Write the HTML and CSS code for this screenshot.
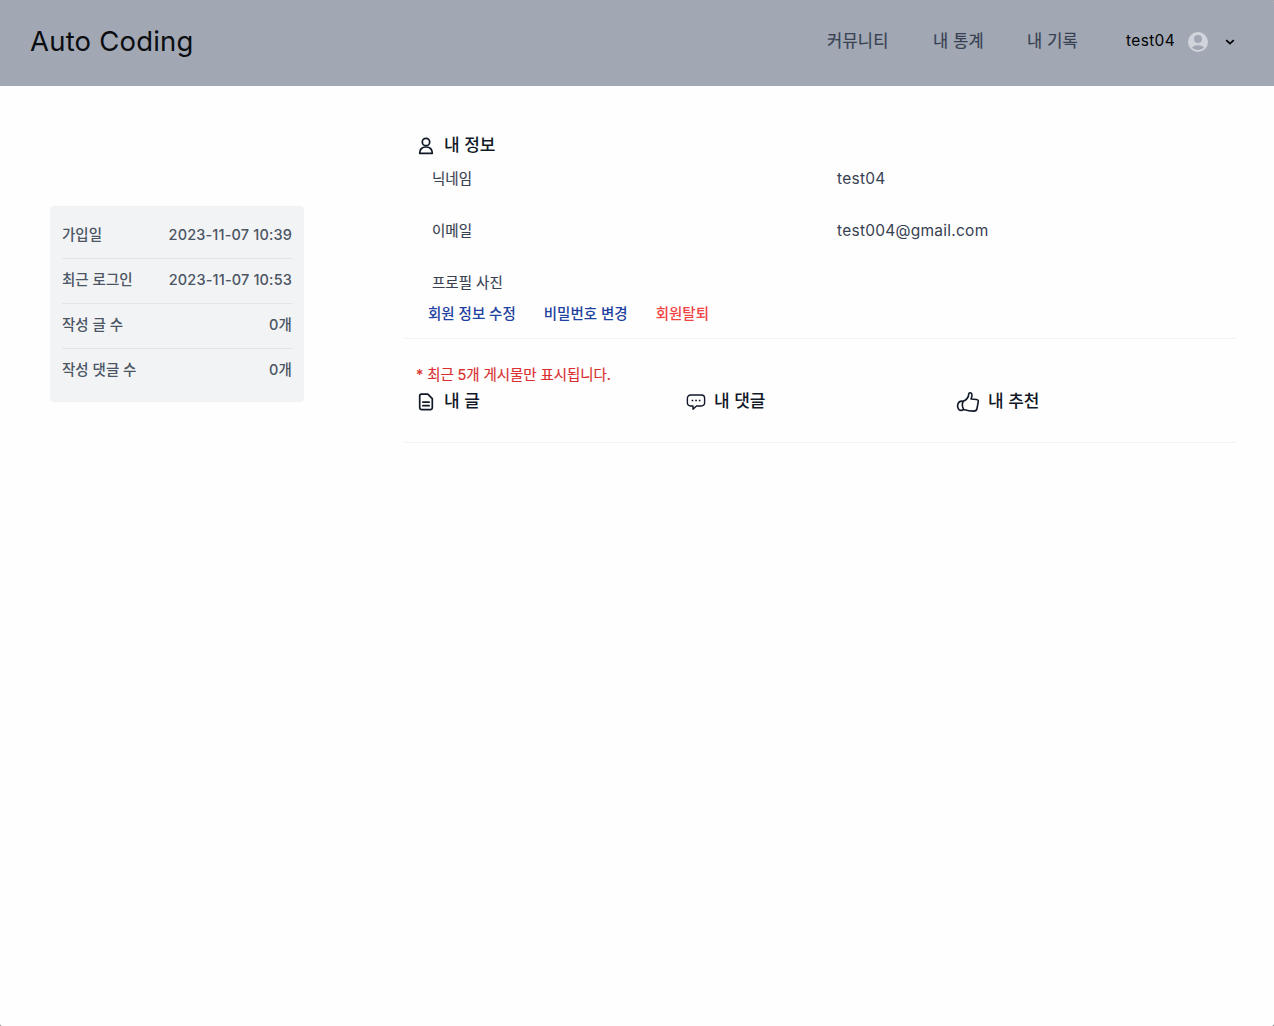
FILE: index.html
```html
<!DOCTYPE html>
<html lang="ko">
<head>
<meta charset="utf-8">
<title>Auto Coding</title>
<link rel="stylesheet" href="styles.css">
</head>
<body>
<div class="page">
  <header class="header">
    <div class="brand">Auto Coding</div>
    <nav class="nav">
      <a class="nav-link nav-community">커뮤니티</a>
      <a class="nav-link nav-stats">내 통계</a>
      <a class="nav-link nav-records">내 기록</a>
      <div class="account">
        <span class="account-name">test04</span>
        <svg class="avatar" viewBox="0 0 20 20"><path fill="#d1d5db" fill-rule="evenodd" d="M10 0a10 10 0 1 0 0 20a10 10 0 0 0 0-20zM10 3a4 4 0 1 1 0 8a4 4 0 0 1 0-8zM4 15.600c1.200-1.600 3.600-2.400 6-2.400s4.800.8 6 2.400c-1.500 1.600-3.600 2.400-6 2.400s-4.500-.8-6-2.400z"/></svg>
        <svg class="chevron" viewBox="0 0 10 6"><path d="M1.200 1.100L5 4.700l3.800-3.600" fill="none" stroke="#000" stroke-width="1.700"/></svg>
      </div>
    </nav>
  </header>
  <main class="main">
    <aside class="stats">
      <div class="stat"><span>가입일</span><span class="num">2023-11-07 10:39</span></div>
      <div class="stat"><span>최근 로그인</span><span class="num">2023-11-07 10:53</span></div>
      <div class="stat"><span>작성 글 수</span><span class="num">0개</span></div>
      <div class="stat"><span>작성 댓글 수</span><span class="num">0개</span></div>
    </aside>
    <div class="content">
      <section class="profile">
        <h2 class="title">
          <svg class="icon" viewBox="0 0 16 18"><g fill="none" stroke="#111827" stroke-width="1.700"><circle cx="8" cy="5" r="3.700"/><path d="M1.700 16.300c0-4 2.500-6.300 6.300-6.300s6.300 2.300 6.300 6.300z" stroke-linejoin="round"/></g></svg>
          <span>내 정보</span>
        </h2>
        <div class="field"><span>닉네임</span><span class="value">test04</span></div>
        <div class="field"><span>이메일</span><span class="value">test004@gmail.com</span></div>
        <div class="field field-last"><span>프로필 사진</span></div>
        <div class="actions">
          <a class="action">회원 정보 수정</a>
          <a class="action">비밀번호 변경</a>
          <a class="action danger">회원탈퇴</a>
        </div>
      </section>
      <section class="activity">
        <p class="notice">* 최근 5개 게시물만 표시됩니다.</p>
        <div class="columns">
          <h2 class="title">
            <svg class="icon" viewBox="0 0 16 18"><path d="M3.500 1.200h6.300l4.500 4.500v9a2 2 0 0 1-2 2H3.700a2 2 0 0 1-2-2V3.200a2 2 0 0 1 1.800-2zM4.900 9.200h6.200M4.900 12.700h6.200" fill="none" stroke="#111827" stroke-width="1.700" stroke-linecap="round" stroke-linejoin="round"/></svg>
            <span>내 글</span>
          </h2>
          <h2 class="title">
            <svg class="icon icon-chat" viewBox="0 0 20 18"><path d="M4.500 2h11a3.100 3.100 0 0 1 3.100 3.100v4.800a3.100 3.100 0 0 1-3.100 3.100H10.500L7 16.300V13H4.500a3.100 3.100 0 0 1-3.100-3.100V5.100A3.100 3.100 0 0 1 4.500 2z" fill="none" stroke="#111827" stroke-width="1.400" stroke-linejoin="round"/><path d="M5.600 6.800h1.700v1.500H5.600zM9.200 6.800h1.700v1.500H9.200zM12.800 6.800h1.700v1.500h-1.700z" fill="#111827"/></svg>
            <span>내 댓글</span>
          </h2>
          <h2 class="title">
            <svg class="icon icon-like" viewBox="0 0 24 22"><path d="M7.300 10.200c2.700-1 5.200-3.800 5.500-7.300c.2-1.600 2.500-1.400 3 .2c.4 1.400.1 2.900-.8 4.900l5.500.5c1.700.2 2 1.300 1.700 2.700l-1.200 6.300c-.4 2-1.600 2.700-3.500 2.600c-4.500-.1-6.300-.6-9.800-1.600M7.300 10.200c-1.300 2.600-1.300 5.600.4 8.300M7.300 10.200c-3-.5-4.500.4-5.300 2.600c-.7 2.200-.4 4.300.9 5.800c1.300 1 3 .9 4.800-.1" fill="none" stroke="#111827" stroke-width="1.600" stroke-linecap="round" stroke-linejoin="round"/></svg>
            <span>내 추천</span>
          </h2>
        </div>
      </section>
    </div>
  </main>
</div>
</body>
</html>
```
FILE: styles.css
```css
* { box-sizing: border-box; }
html { background: #6b6d70; }
body {
  margin: 0;
  font-family: "Inter", "Noto Sans CJK KR", sans-serif;
  color: #111827;
}
.page {
  min-height: 1026px;
  background: #fefefe;
  border-radius: 2px;
  overflow: hidden;
}
.header {
  height: 86px;
  padding: 20px 38px 0 30px;
  background: #a1a8b4;
  display: flex;
  justify-content: space-between;
}
.brand {
  font-size: 27.5px;
  line-height: 42px;
  letter-spacing: .2px;
  color: #0b0d11;
  white-space: nowrap;
}
.nav {
  display: flex;
  height: 42px;
  line-height: 42px;
  font-size: 16.5px;
  white-space: nowrap;
}
.nav-link { letter-spacing: .2px; color: #374151; -webkit-text-stroke: .2px #374151; }
.nav-community { width: 106px; }
.nav-stats { width: 94px; }
.nav-records { width: 99px; }
.account { display: flex; align-items: center; color: #000; }
.account-name { width: 62px; font-size: 15.5px; letter-spacing: .35px; }
.avatar { width: 20px; height: 20px; margin-top: 2px; }
.chevron { width: 10px; height: 6px; margin: 2px 1px 0 17px; }
.main { display: flex; padding: 0 38px 0 50px; }
.stats {
  width: 254px;
  height: 196px;
  margin: 120px 100px 0 0;
  padding: 8px 11px 8px 12px;
  border-radius: 4px;
  background: #f2f3f5;
  flex: none;
}
.stat {
  height: 45px;
  display: flex;
  justify-content: space-between;
  border-bottom: 1px solid #e3e5e9;
  font-size: 14.5px;
  font-weight: 500;
  line-height: 41px;
  color: #4b5563;
}
.stat:last-child { border-bottom: 0; }
.num { letter-spacing: .15px; margin-right: 1px; }
.content { flex: 1; }
.profile { height: 253px; padding-top: 46px; border-bottom: 1px solid #f1f2f4; }
.title {
  display: flex;
  align-items: center;
  gap: 10px;
  height: 26px;
  margin: 0;
  padding-left: 14px;
  font-size: 17px;
  font-weight: 500;
  line-height: 26px;
}
.icon { width: 16px; height: 18px; flex: none; margin-top: 2px; }
.icon-chat { width: 20px; }
.icon-like { width: 24px; height: 22px; margin-top: 2px; }
.field {
  height: 52px;
  padding: 8px 0 0 28px;
  display: grid;
  grid-template-columns: 405px 1fr;
  font-size: 14.5px;
  line-height: 26px;
  color: #374151;
  -webkit-text-stroke: .15px #374151;
}
.field-last { height: 36px; }
.value { font-size: 15.5px; letter-spacing: .25px; -webkit-text-stroke: 0; }
.actions {
  display: flex;
  gap: 28px;
  padding: 1px 0 0 24px;
  font-size: 14.5px;
  font-weight: 500;
  line-height: 30px;
  color: #1e429f;
}
.danger { color: #f04444; }
.activity { height: 104px; padding-top: 23px; border-bottom: 1px solid #f1f2f4; }
.notice {
  margin: 0;
  padding-left: 12px;
  font-size: 14.5px;
  letter-spacing: -.1px;
  line-height: 26px;
  color: #d92f2f;
  -webkit-text-stroke: .15px #d92f2f;
}
.columns { display: grid; grid-template-columns: 268px 270px 1fr; }
.columns .title:nth-child(n+2) { gap: 8px; }
```
